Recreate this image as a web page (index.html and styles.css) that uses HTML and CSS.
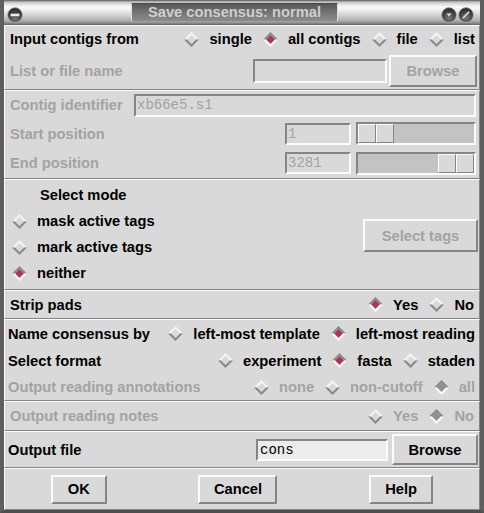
FILE: index.html
```html
<!DOCTYPE html>
<html>
<head>
<meta charset="utf-8">
<title>Save consensus: normal</title>
<link rel="stylesheet" href="styles.css">
</head>
<body>
<svg class="defs" width="0" height="0" aria-hidden="true">
  <defs>
    <symbol id="d-off" viewBox="0 0 15 15">
      <polygon points="3,7.5 7.5,3 12,7.5 7.5,12" fill="#d9d9d9"/>
      <polygon points="0,7.5 7.5,0 15,7.5 12,7.5 7.5,3 3,7.5" fill="#f4f4f4"/>
      <polygon points="0,7.5 3,7.5 7.5,12 12,7.5 15,7.5 7.5,15" fill="#8a8a8a"/>
    </symbol>
    <symbol id="d-on" viewBox="0 0 15 15">
      <polygon points="3,7.5 7.5,3 12,7.5 7.5,12" fill="#b03060"/>
      <polygon points="0,7.5 7.5,0 15,7.5 12,7.5 7.5,3 3,7.5" fill="#8a8a8a"/>
      <polygon points="0,7.5 3,7.5 7.5,12 12,7.5 15,7.5 7.5,15" fill="#f8f8f8"/>
    </symbol>
    <symbol id="d-ondis" viewBox="0 0 15 15">
      <polygon points="3,7.5 7.5,3 12,7.5 7.5,12" fill="#8e8e8e"/>
      <polygon points="0,7.5 7.5,0 15,7.5 12,7.5 7.5,3 3,7.5" fill="#8a8a8a"/>
      <polygon points="0,7.5 3,7.5 7.5,12 12,7.5 15,7.5 7.5,15" fill="#f8f8f8"/>
    </symbol>
    <radialGradient id="cg" cx="50%" cy="70%" r="60%">
      <stop offset="0" stop-color="#7a7a7a"/>
      <stop offset="1" stop-color="#2c2c2c"/>
    </radialGradient>
  </defs>
</svg>

<div class="window">
  <div class="titlebar">
    <svg class="tbb tb-left" viewBox="0 0 16 16">
      <circle cx="8" cy="8" r="7.4" fill="url(#cg)" stroke="#b0b0b0" stroke-width="0.8"/>
      <rect x="3.2" y="6.3" width="9.6" height="3.4" rx="1" fill="#ececec" stroke="#1e1e1e" stroke-width="0.6"/>
    </svg>
    <div class="title">Save consensus: normal</div>
    <div class="tb-right">
      <svg class="tbb" viewBox="0 0 16 16">
        <circle cx="8" cy="8" r="7.4" fill="url(#cg)" stroke="#b0b0b0" stroke-width="0.8"/>
        <polygon points="5.5,6.5 10.5,6.5 8,9.5" fill="#e0e0e0"/>
      </svg>
      <svg class="tbb" viewBox="0 0 16 16">
        <circle cx="8" cy="8" r="7.4" fill="url(#cg)" stroke="#b0b0b0" stroke-width="0.8"/>
        <line x1="4.8" y1="11.2" x2="11.2" y2="4.8" stroke="#e4e4e4" stroke-width="1.6"/>
      </svg>
    </div>
  </div>

  <div class="content">
    <section class="sec s1">
      <div class="row r1a">
        <span class="lbl">Input contigs from</span>
        <div class="radios">
          <span class="rb"><svg class="dia" viewBox="0 0 15 15"><use href="#d-off" width="15" height="15"/></svg><span>single</span></span>
          <span class="rb"><svg class="dia" viewBox="0 0 15 15"><use href="#d-on" width="15" height="15"/></svg><span>all contigs</span></span>
          <span class="rb"><svg class="dia" viewBox="0 0 15 15"><use href="#d-off" width="15" height="15"/></svg><span>file</span></span>
          <span class="rb"><svg class="dia" viewBox="0 0 15 15"><use href="#d-off" width="15" height="15"/></svg><span>list</span></span>
        </div>
      </div>
      <div class="row r1b">
        <span class="lbl dis">List or file name</span>
        <span class="entry e-list"></span>
        <span class="btn dis b-browse1">Browse</span>
      </div>
    </section>

    <section class="sec s2">
      <div class="row r2a">
        <span class="lbl dis">Contig identifier</span>
        <span class="entry mono dis e-contig">xb66e5.s1</span>
      </div>
      <div class="row r2b">
        <span class="lbl dis">Start position</span>
        <span class="entry mono dis e-pos">1</span>
        <span class="scale"><span class="slider"><span></span><span></span></span></span>
      </div>
      <div class="row r2c">
        <span class="lbl dis">End position</span>
        <span class="entry mono dis e-pos">3281</span>
        <span class="scale scale-end"><span class="slider"><span></span><span></span></span></span>
      </div>
    </section>

    <section class="sec s3">
      <div class="modecol">
        <div class="modelbl">Select mode</div>
        <span class="rb"><svg class="dia" viewBox="0 0 15 15"><use href="#d-off" width="15" height="15"/></svg><span>mask active tags</span></span>
        <span class="rb"><svg class="dia" viewBox="0 0 15 15"><use href="#d-off" width="15" height="15"/></svg><span>mark active tags</span></span>
        <span class="rb"><svg class="dia" viewBox="0 0 15 15"><use href="#d-on" width="15" height="15"/></svg><span>neither</span></span>
      </div>
      <span class="btn dis b-tags">Select tags</span>
    </section>

    <section class="sec s4">
      <span class="lbl">Strip pads</span>
      <div class="radios">
        <span class="rb"><svg class="dia" viewBox="0 0 15 15"><use href="#d-on" width="15" height="15"/></svg><span>Yes</span></span>
        <span class="rb"><svg class="dia" viewBox="0 0 15 15"><use href="#d-off" width="15" height="15"/></svg><span>No</span></span>
      </div>
    </section>

    <section class="sec s5">
      <div class="row r5a">
        <span class="lbl">Name consensus by</span>
        <div class="radios">
          <span class="rb"><svg class="dia" viewBox="0 0 15 15"><use href="#d-off" width="15" height="15"/></svg><span>left-most template</span></span>
          <span class="rb"><svg class="dia" viewBox="0 0 15 15"><use href="#d-on" width="15" height="15"/></svg><span>left-most reading</span></span>
        </div>
      </div>
      <div class="row r5b">
        <span class="lbl">Select format</span>
        <div class="radios">
          <span class="rb"><svg class="dia" viewBox="0 0 15 15"><use href="#d-off" width="15" height="15"/></svg><span>experiment</span></span>
          <span class="rb"><svg class="dia" viewBox="0 0 15 15"><use href="#d-on" width="15" height="15"/></svg><span>fasta</span></span>
          <span class="rb"><svg class="dia" viewBox="0 0 15 15"><use href="#d-off" width="15" height="15"/></svg><span>staden</span></span>
        </div>
      </div>
      <div class="row r5c dis">
        <span class="lbl">Output reading annotations</span>
        <div class="radios">
          <span class="rb"><svg class="dia" viewBox="0 0 15 15"><use href="#d-off" width="15" height="15"/></svg><span>none</span></span>
          <span class="rb"><svg class="dia" viewBox="0 0 15 15"><use href="#d-off" width="15" height="15"/></svg><span>non-cutoff</span></span>
          <span class="rb"><svg class="dia" viewBox="0 0 15 15"><use href="#d-ondis" width="15" height="15"/></svg><span>all</span></span>
        </div>
      </div>
    </section>

    <section class="sec s6 dis">
      <span class="lbl">Output reading notes</span>
      <div class="radios">
        <span class="rb"><svg class="dia" viewBox="0 0 15 15"><use href="#d-off" width="15" height="15"/></svg><span>Yes</span></span>
        <span class="rb"><svg class="dia" viewBox="0 0 15 15"><use href="#d-ondis" width="15" height="15"/></svg><span>No</span></span>
      </div>
    </section>

    <section class="sec s7">
      <span class="lbl">Output file</span>
      <span class="entry mono e-out">cons</span>
      <span class="btn b-browse2">Browse</span>
    </section>

    <section class="sec s8">
      <span class="btn b-ok">OK</span>
      <span class="btn b-cancel">Cancel</span>
      <span class="btn b-help">Help</span>
    </section>
  </div>
</div>
</body>
</html>
```

FILE: styles.css
```css
* { box-sizing: border-box; margin: 0; padding: 0; }

html, body {
  width: 484px;
  height: 513px;
  overflow: hidden;
  background: #d9d9d9;
}

body {
  font-family: "Liberation Sans", Arial, sans-serif;
  font-weight: bold;
  font-size: 14.7px;
  color: #000;
}

.defs { position: absolute; width: 0; height: 0; }

.window {
  width: 484px;
  height: 513px;
  display: flex;
  flex-direction: column;
  border-left: 4px solid #5e5e5e;
  border-right: 4px solid #5e5e5e;
  border-bottom: 3px solid #4e4e4e;
  background: #d9d9d9;
}

/* ---------- title bar ---------- */
.titlebar {
  height: 25px;
  flex: none;
  display: flex;
  align-items: flex-start;
  background: linear-gradient(to bottom,
    #4a4a4a 0px, #9a9a9a 1px, #d4d4d4 3px, #fafafa 7px, #f0f0f0 10px,
    #d2d2d2 15px, #b4b4b4 20px, #8e8e8e 23px, #606060 25px);
}

.tbb { width: 16px; height: 16px; display: block; }
.tb-left { margin: 7px 0 0 3px; }

.title {
  margin: 3px 0 0 108px;
  width: 207px;
  height: 19px;
  border-left: 1px solid #e0e0e0;
  border-right: 1px solid #e0e0e0;
  border-top: 1px solid #4a4a4a;
  border-bottom: 1px solid #a0a0a0;
  background: linear-gradient(to bottom, #585858 0%, #727272 45%, #8c8c8c 100%);
  color: #cfcfcf;
  font-size: 14.7px;
  line-height: 17px;
  text-align: center;
}

.tb-right {
  margin: 7px 6px 0 auto;
  display: flex;
  gap: 1px;
}

/* ---------- sections ---------- */
.content { display: flex; flex-direction: column; flex: 1; }

.sec {
  border: 1px solid;
  border-color: #fbfbfb #858585 #858585 #fbfbfb;
  display: flex;
}

.row { display: flex; align-items: center; }
.lbl { white-space: nowrap; }
.dis, .dis .lbl { color: #a3a3a3; }

.radios { display: flex; gap: 11px; margin-left: auto; }
.rb { display: flex; align-items: center; gap: 10px; white-space: nowrap; }
.dia { width: 15px; height: 15px; display: block; flex: none; }

.entry {
  display: flex;
  align-items: center;
  border: 2px solid;
  border-color: #858585 #fbfbfb #fbfbfb #858585;
  background: #d9d9d9;
  padding-left: 1px;
}
.mono {
  font-family: "Liberation Mono", "Courier New", monospace;
  font-weight: normal;
  font-size: 14px;
}

.btn {
  display: flex;
  align-items: center;
  justify-content: center;
  border: 2px solid;
  border-color: #fbfbfb #858585 #858585 #fbfbfb;
  background: #d9d9d9;
  white-space: nowrap;
}
.btn.dis { color: #a3a3a3; }

/* section 1 */
.s1 { height: 65px; flex-direction: column; padding: 0 2px 0 5px; }
.r1a { height: 26px; }
.r1a .radios { margin-right: 2px; }
.r1b { height: 37px; }
.e-list { width: 134px; height: 24px; margin-left: auto; }
.b-browse1 { width: 88px; height: 32px; margin-left: 2px; }

/* section 2 */
.s2 { height: 89px; flex-direction: column; padding: 0 3px 0 5px; }
.r2a { height: 28px; }
.r2b { height: 29px; }
.r2c { height: 30px; }
.e-contig { width: 342px; height: 23px; margin-left: auto; color: #a3a3a3; }
.e-pos { width: 66px; height: 22px; margin-left: auto; color: #a3a3a3; }

.scale {
  width: 120px;
  height: 23px;
  margin-left: 5px;
  border: 2px solid;
  border-color: #858585 #fbfbfb #fbfbfb #858585;
  background: #c3c3c3;
  display: flex;
}
.scale-end { justify-content: flex-end; }
.slider { display: flex; height: 100%; }
.slider span {
  width: 18px;
  height: 100%;
  border: 1px solid;
  border-color: #fbfbfb #858585 #858585 #fbfbfb;
  background: #d9d9d9;
}

/* section 3 */
.s3 { height: 111px; align-items: center; padding: 2px 1px 3px 7px; }
.modecol { display: flex; flex-direction: column; }
.modecol > * { height: 26px; }
.modelbl { text-align: center; line-height: 26px; }
.b-tags { width: 115px; height: 33px; margin: 3px 0 0 auto; }

/* section 4 */
.s4 { height: 29px; align-items: center; padding: 0 5px 0 5px; }

/* section 5 */
.s5 { height: 82px; flex-direction: column; padding: 0 4px 0 3px; }
.r5a, .r5b { height: 27px; }
.r5c { height: 26px; }

/* section 6 */
.s6 { height: 30px; align-items: center; padding: 0 5px 0 5px; }

/* section 7 */
.s7 { height: 37px; align-items: center; padding: 0 1px 0 3px; }
.e-out { width: 132px; height: 22px; margin-left: auto; background: #ececec; padding-left: 2px; }
.b-browse2 { width: 86px; height: 31px; margin-left: 4px; }

/* section 8 */
.s8 { height: 42px; align-items: center; justify-content: space-around; }
.b-ok { width: 56px; height: 29px; }
.b-cancel { width: 79px; height: 29px; }
.b-help { width: 64px; height: 29px; }
```
